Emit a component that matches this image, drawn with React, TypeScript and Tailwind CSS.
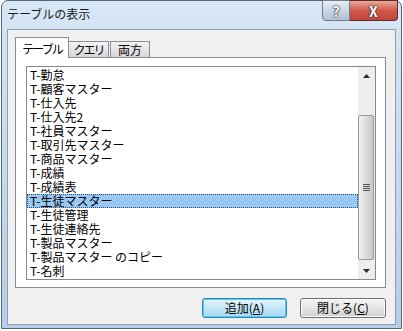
import React from "react";

const tables = [
  "T-勤怠",
  "T-顧客マスター",
  "T-仕入先",
  "T-仕入先2",
  "T-社員マスター",
  "T-取引先マスター",
  "T-商品マスター",
  "T-成績",
  "T-成績表",
  "T-生徒マスター",
  "T-生徒管理",
  "T-生徒連絡先",
  "T-製品マスター",
  "T-製品マスター のコピー",
  "T-名刺",
];

const SELECTED = 9;

// caption glyph with dark outline, like the aero buttons
const CaptionGlyph = ({ children }: { children: string }) => (
  <span
    className="text-[14px] font-bold leading-none text-white"
    style={{ textShadow: "0 0 1px #2a2a2a, 0 0 1px #2a2a2a, 0 0 2px #333" }}
  >
    {children}
  </span>
);

const ScrollBar = () => (
  <div className="w-[17px] flex flex-col bg-[#eeeeee]">
    <div className="h-[17px] flex items-center justify-center">
      <svg width="7" height="4" viewBox="0 0 7 4">
        <path d="M0 4 L3.5 0 L7 4 Z" fill="#2b2b2b" />
      </svg>
    </div>
    <div className="h-[31px]" />
    <div className="h-[145px] w-[16px] rounded-[2px] border border-[#9a9a9a] bg-gradient-to-r from-[#f2f2f2] via-[#dcdcdc] to-[#c8c8c8] flex items-center justify-center">
      <div className="flex flex-col gap-[1px]">
        <div className="w-[7px] h-[1px] bg-[#555]" />
        <div className="w-[7px] h-[1px] bg-[#555]" />
        <div className="w-[7px] h-[1px] bg-[#555]" />
        <div className="w-[7px] h-[1px] bg-[#555]" />
      </div>
    </div>
    <div className="flex-1" />
    <div className="h-[17px] flex items-center justify-center">
      <svg width="7" height="4" viewBox="0 0 7 4">
        <path d="M0 0 L7 0 L3.5 4 Z" fill="#2b2b2b" />
      </svg>
    </div>
  </div>
);

export default function App() {
  return (
    <div className="w-[403px] h-[331px] bg-white font-['Noto_Sans_CJK_JP',sans-serif] text-black">
      {/* window frame */}
      <div className="ml-[1px] w-[401px] h-[329px] rounded-t-[7px] border border-[#52667d] bg-gradient-to-b from-[#d8e7f6] via-[#c6daef] to-[#b6cee8] flex flex-col">
        {/* title bar */}
        <div className="h-[28px] flex justify-between items-start">
          <div className="pl-[5px] pt-[5px] text-[12px] leading-[16px] text-[#1b1b1b]">テーブルの表示</div>
          <div className="-mt-px mr-[3px] flex">
            <div className="w-[28px] h-[21px] rounded-bl-[4px] border border-[#6f7c8c] bg-gradient-to-b from-[#e6edf5] via-[#c9d6e4] to-[#b2c3d6] flex items-center justify-center">
              <CaptionGlyph>?</CaptionGlyph>
            </div>
            <div className="w-[48px] h-[21px] rounded-br-[4px] border border-l-0 border-[#5e2a26] bg-gradient-to-b from-[#e9a99c] via-[#d0594c] to-[#c0463a] flex items-center justify-center">
              <CaptionGlyph>X</CaptionGlyph>
            </div>
          </div>
        </div>

        {/* client area */}
        <div className="mx-[5px] mb-[3px] flex-1 border border-[#8f9db0] bg-[#f0f0f0] pl-[7px] pr-[9px] pt-[7px] flex flex-col">
          {/* tabs */}
          <div className="flex items-end text-[12px]">
            <div className="h-[21px] w-[54px] -mb-px relative z-10 border border-b-0 border-[#898c95] bg-white flex items-center justify-center pt-[2px] tracking-[-2px]">
              テーブル
            </div>
            <div className="h-[16px] w-[40px] border-t border-r border-[#898c95] bg-gradient-to-b from-[#f3f3f3] to-[#d6d6d6] flex items-center justify-center leading-none tracking-[-2px]">
              クエリ
            </div>
            <div className="h-[16px] w-[40px] ml-[1px] border-t border-x border-[#898c95] bg-gradient-to-b from-[#f3f3f3] to-[#d6d6d6] flex items-center justify-center leading-none">
              両方
            </div>
          </div>

          {/* tab panel */}
          <div className="h-[231px] border border-[#898c95] bg-white pl-[10px] pr-[9px] pt-[8px]">
            <div className="h-[214px] border border-[#828790] bg-white flex">
              <div className="flex-1 pt-[1px] text-[12px]">
                {tables.map((t, i) => (
                  <div
                    key={t}
                    className={
                      i === SELECTED
                        ? "h-[14px] leading-[12px] pl-[2px] bg-[#99c8f2] border border-dotted border-[#2f4f78]"
                        : "h-[14px] leading-[14px] pl-[3px]"
                    }
                  >
                    {t}
                  </div>
                ))}
              </div>
              <ScrollBar />
            </div>
          </div>

          {/* buttons */}
          <div className="mt-[10px] flex justify-end gap-[13px] text-[12px]">
            <button className="w-[85px] h-[20px] rounded-[3px] border border-[#3c7fb1] bg-gradient-to-b from-[#e8f6fd] via-[#c4e5f6] to-[#a7d9f5] shadow-[inset_0_0_0_1px_#48d2f7] flex items-center justify-center leading-none">
              追加(<span className="underline">A</span>)
            </button>
            <button className="w-[86px] h-[20px] rounded-[3px] border border-[#707070] bg-gradient-to-b from-[#f2f2f2] via-[#e6e6e6] to-[#cfcfcf] shadow-[inset_0_0_0_1px_#fbfbfb] flex items-center justify-center leading-none">
              閉じる(<span className="underline">C</span>)
            </button>
          </div>
        </div>
      </div>
    </div>
  );
}
